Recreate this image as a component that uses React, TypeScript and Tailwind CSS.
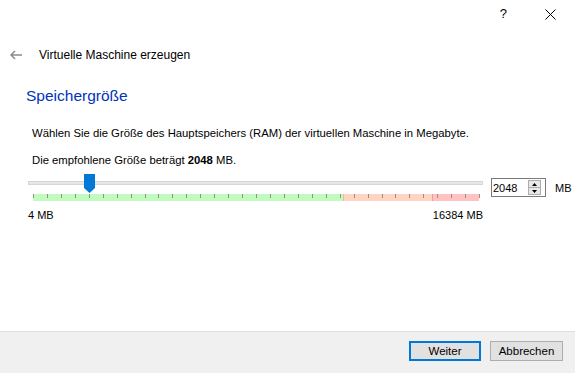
import React from 'react';

const TICK_COUNT = 33;
const TICK_STEP = 13.94;

const Handle = () => (
  <svg width="11" height="19" viewBox="0 0 11 19" className="block">
    <polygon points="0,0 11,0 11,14 5.5,19 0,14" fill="#0078d7" />
  </svg>
);

const Slider = () => {
  const ticks = [...Array(TICK_COUNT)].map((_, i) => 5 + i * TICK_STEP);
  return (
    <div className="w-[455px] flex flex-col">
      {/* groove + handle */}
      <div className="relative h-[20px]">
        <div className="absolute left-0 right-0 top-[7px] h-[4px] bg-[#e7e7e7] border border-[#d6d6d6]" />
        <div className="absolute left-[56px] top-0">
          <Handle />
        </div>
      </div>
      {/* tick band */}
      <div className="relative ml-[5px] w-[446px] h-[7px] flex">
        <div className="w-[310px] bg-[#c0fcc0]" />
        <div className="w-[89px] bg-[#ffd4c0] border-l border-[#f3b69a]" />
        <div className="flex-1 bg-[#ffc2c2] border-l border-[#f59a9a]" />
        {ticks.map((x, i) => (
          <div
            key={i}
            className="absolute top-0 w-px h-[4px] bg-[#9a9280]"
            style={{ left: x - 5 }}
          />
        ))}
      </div>
      <div className="flex justify-between mt-[6px] text-[11px] leading-[16px]">
        <span>4 MB</span>
        <span>16384 MB</span>
      </div>
    </div>
  );
};

const SpinBox = () => (
  <div className="w-[55px] h-[19px] border border-[#7a7a7a] bg-white flex items-center justify-between pl-[1px] pr-[4px]">
    <span className="text-[11px] leading-[16px]">2048</span>
    <div className="w-[13px] h-[15px] border border-[#adadad] bg-[#e8e8e8] flex flex-col">
      <div className="flex-1 flex items-center justify-center border-b border-[#adadad]">
        <svg width="5" height="3" viewBox="0 0 5 3"><polygon points="0,3 5,3 2.5,0" fill="#000" /></svg>
      </div>
      <div className="flex-1 flex items-center justify-center">
        <svg width="5" height="3" viewBox="0 0 5 3"><polygon points="0,0 5,0 2.5,3" fill="#000" /></svg>
      </div>
    </div>
  </div>
);

export default function App() {
  return (
    <div
      className="w-[575px] h-[373px] bg-white flex flex-col text-black overflow-hidden"
      style={{ fontFamily: '"Liberation Sans", Arial, sans-serif' }}
    >
      {/* title bar buttons */}
      <div className="h-[45px] flex justify-end items-start pt-[7px] pr-[19px] gap-[38px]">
        <span className="text-[13px] leading-[14px]">?</span>
        <svg width="11" height="11" viewBox="0 0 11 11" className="mt-[2px]">
          <path d="M0.5 0.5 L10.5 10.5 M10.5 0.5 L0.5 10.5" stroke="#000" strokeWidth="1" />
        </svg>
      </div>

      {/* wizard title */}
      <div className="h-[20px] flex items-center pl-[10px] gap-[17px]">
        <svg width="12" height="10" viewBox="0 0 12 10">
          <path d="M1 5 H12 M5 1 L1 5 L5 9" stroke="#8a8a8a" strokeWidth="1.5" fill="none" />
        </svg>
        <span className="text-[12px] leading-[16px]">Virtuelle Maschine erzeugen</span>
      </div>

      {/* page header */}
      <div className="mt-[21px] pl-[26px] text-[15.5px] leading-[20px] text-[#0033bc]">Speichergröße</div>

      <div className="pl-[32px] mt-[19px] text-[11.3px] leading-[16px]">
        Wählen Sie die Größe des Hauptspeichers (RAM) der virtuellen Maschine in Megabyte.
      </div>
      <div className="pl-[32px] mt-[11px] text-[11.3px] leading-[16px]">
        Die empfohlene Größe beträgt <b>2048</b> MB.
      </div>

      <div className="mt-[6px] pl-[28px] flex items-start">
        <Slider />
        <div className="ml-[8px] mt-[4px] flex items-center gap-[9px]">
          <SpinBox />
          <span className="text-[11px] leading-[16px]">MB</span>
        </div>
      </div>

      <div className="flex-1" />

      {/* footer */}
      <div className="h-[42px] border-t border-[#dfdfdf] bg-[#f0f0f0] flex justify-end items-start pt-[9px] pr-[12px] gap-[9px]">
        <button className="w-[72px] h-[20px] border-2 border-[#0078d7] bg-[#e1e1e1] text-[11.5px] leading-[14px]">
          Weiter
        </button>
        <button className="w-[73px] h-[20px] border border-[#adadad] bg-[#e1e1e1] text-[11.5px] leading-[16px]">
          Abbrechen
        </button>
      </div>
    </div>
  );
}
